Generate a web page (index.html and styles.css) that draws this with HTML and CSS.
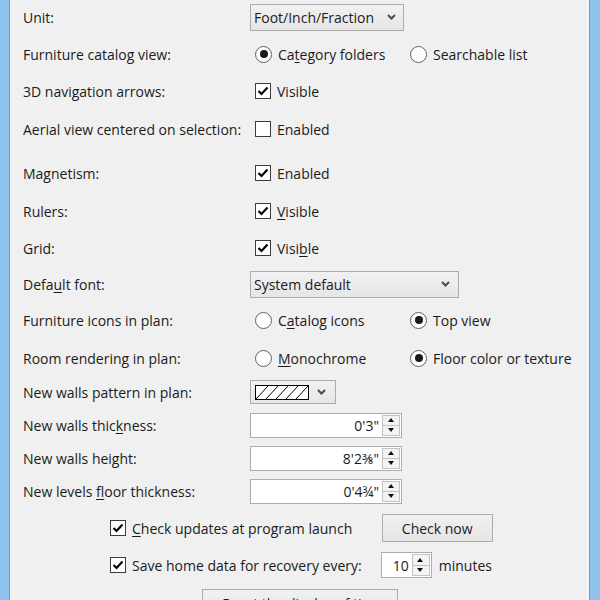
FILE: index.html
```html
<!DOCTYPE html>
<html>
<head>
<meta charset="utf-8">
<link rel="stylesheet" href="styles.css">
</head>
<body>
<div class="dialog">
  <div class="rows">
    <div class="row">
      <span class="label">Unit:</span>
      <div class="combo combo-unit"><span>Foot/Inch/Fraction</span><svg class="chev" width="9" height="6" viewBox="0 0 9 6"><path d="M1 1 L4.5 4.5 L8 1" /></svg></div>
    </div>
    <div class="row g11">
      <span class="label">Furniture catalog view:</span>
      <div class="opt"><span class="rb on"></span><span>Ca<u>t</u>egory folders</span></div>
      <div class="opt"><span class="rb"></span><span>Searchable list</span></div>
    </div>
    <div class="row g11">
      <span class="label">3D navigation arrows:</span>
      <div class="opt"><span class="cb"><svg width="12" height="10" viewBox="0 0 12 10"><path d="M1.5 5 L4.5 8 L10.5 1.5"/></svg></span><span>Visible</span></div>
    </div>
    <div class="row g12">
      <span class="label">Aerial view centered on selection:</span>
      <div class="opt"><span class="cb"></span><span>Enabled</span></div>
    </div>
    <div class="row g18">
      <span class="label">Magnetism:</span>
      <div class="opt"><span class="cb"><svg width="12" height="10" viewBox="0 0 12 10"><path d="M1.5 5 L4.5 8 L10.5 1.5"/></svg></span><span>Enabled</span></div>
    </div>
    <div class="row g12">
      <span class="label">Rulers:</span>
      <div class="opt"><span class="cb"><svg width="12" height="10" viewBox="0 0 12 10"><path d="M1.5 5 L4.5 8 L10.5 1.5"/></svg></span><span><u>V</u>isible</span></div>
    </div>
    <div class="row g11">
      <span class="label">Grid:</span>
      <div class="opt"><span class="cb"><svg width="12" height="10" viewBox="0 0 12 10"><path d="M1.5 5 L4.5 8 L10.5 1.5"/></svg></span><span>Visi<u>b</u>le</span></div>
    </div>
    <div class="row g10">
      <span class="label">Defa<u>u</u>lt font:</span>
      <div class="combo combo-font"><span>System default</span><svg class="chev" width="9" height="6" viewBox="0 0 9 6"><path d="M1 1 L4.5 4.5 L8 1" /></svg></div>
    </div>
    <div class="row g10">
      <span class="label">Furniture icons in plan:</span>
      <div class="opt"><span class="rb"></span><span>C<u>a</u>talog icons</span></div>
      <div class="opt"><span class="rb on"></span><span>Top view</span></div>
    </div>
    <div class="row g12">
      <span class="label">Room rendering in plan:</span>
      <div class="opt"><span class="rb"></span><span><u>M</u>onochrome</span></div>
      <div class="opt"><span class="rb on"></span><span>Floor color or texture</span></div>
    </div>
    <div class="row g8">
      <span class="label">New walls pattern in plan:</span>
      <div class="combo combo-pattern">
        <svg class="hatch" width="54" height="15" viewBox="0 0 54 15"><rect x="0.5" y="0.5" width="53" height="14" fill="#fff" stroke="#000"/><path d="M1 14 L13 1 M11 14 L23 1 M21 14 L33 1 M31 14 L43 1 M41 14 L53 1" stroke="#000" stroke-width="1"/></svg>
        <svg class="chev" width="9" height="6" viewBox="0 0 9 6"><path d="M1 1 L4.5 4.5 L8 1" /></svg>
      </div>
    </div>
    <div class="row g7">
      <span class="label">New walls thic<u>k</u>ness:</span>
      <div class="spin"><span class="val">0'3"</span><span class="btns"><span class="up"></span><span class="dn"></span></span></div>
    </div>
    <div class="row g7">
      <span class="label">New walls height:</span>
      <div class="spin"><span class="val">8'2⅜"</span><span class="btns"><span class="up"></span><span class="dn"></span></span></div>
    </div>
    <div class="row g7">
      <span class="label">New levels <u>f</u>loor thickness:</span>
      <div class="spin"><span class="val">0'4¾"</span><span class="btns"><span class="up"></span><span class="dn"></span></span></div>
    </div>
  </div>
  <div class="extras">
    <div class="opt wide"><span class="cb"><svg width="12" height="10" viewBox="0 0 12 10"><path d="M1.5 5 L4.5 8 L10.5 1.5"/></svg></span><span><u>C</u>heck updates at program launch</span></div>
    <button class="btn btn-check">Check now</button>
    <div class="opt wide"><span class="cb"><svg width="12" height="10" viewBox="0 0 12 10"><path d="M1.5 5 L4.5 8 L10.5 1.5"/></svg></span><span>Save home data for recovery every:</span></div>
    <div class="spin spin-small"><span class="val">10</span><span class="btns"><span class="up"></span><span class="dn"></span></span></div>
    <span class="unit-text">minutes</span>
  </div>
  <div class="reset-wrap"><button class="btn btn-reset">Reset the display of tips</button></div>
</div>
</body>
</html>
```
FILE: styles.css
```css
html, body {
  margin: 0;
  height: 600px;
  overflow: hidden;
}
body {
  background: #8fc3ee;
  font-family: "Open Sans", "Noto Sans", sans-serif;
  font-size: 14px;
  color: #1b1b1b;
}
u { text-decoration: underline; text-underline-offset: 2px; }

.dialog {
  margin-left: 9px;
  width: 579px;
  height: 600px;
  border-left: 1px solid #6b9bcf;
  border-right: 1px solid #6b9bcf;
  background: #f0f0f0;
  box-shadow: inset -3px 0 0 #f4f4f4;
}
.rows {
  padding: 4px 0 0 13px;
}
.row {
  display: flex;
  align-items: center;
  height: 26px;
}
.g7 { margin-top: 7px; }
.g8 { margin-top: 8px; }
.g10 { margin-top: 10px; }
.g11 { margin-top: 11px; }
.g12 { margin-top: 12px; }
.g18 { margin-top: 18px; }

.label {
  width: 227px;
  flex: none;
  white-space: nowrap;
}

.combo {
  display: flex;
  align-items: center;
  justify-content: space-between;
  box-sizing: border-box;
  height: 27px;
  border: 1px solid #acacac;
  background: linear-gradient(#f1f1f1, #e6e6e6);
  padding: 0 7px 0 3px;
}
.combo-unit { width: 154px; }
.combo-font { width: 209px; padding-right: 8px; }
.combo-pattern { width: 86px; height: 24px; padding: 0 9px 0 4px; }
.chev path {
  fill: none;
  stroke: #4a4a4a;
  stroke-width: 2;
}
.hatch { display: block; }

.opt {
  display: flex;
  align-items: center;
  gap: 6px;
  width: 155px;
  margin-left: 5px;
  white-space: nowrap;
}
.opt + .opt { margin-left: 0; }
.cb {
  width: 16px;
  height: 16px;
  box-sizing: border-box;
  border: 1px solid #3c3c3c;
  background: #fff;
  display: flex;
  align-items: center;
  justify-content: center;
  flex: none;
}
.cb svg path {
  fill: none;
  stroke: #000;
  stroke-width: 2.2;
}
.rb {
  width: 17px;
  height: 17px;
  box-sizing: border-box;
  border: 1px solid #606060;
  border-radius: 50%;
  background: #fff;
  flex: none;
  display: flex;
  align-items: center;
  justify-content: center;
}
.rb.on::after {
  content: "";
  width: 8px;
  height: 8px;
  border-radius: 50%;
  background: #1a1a1a;
}

.spin {
  display: flex;
  box-sizing: border-box;
  width: 152px;
  height: 25px;
  border: 1px solid #abadb3;
  background: #fff;
}
.spin .val {
  flex: 1;
  text-align: right;
  padding-right: 3px;
  align-self: center;
}
.spin .btns {
  width: 19px;
  display: flex;
  flex-direction: column;
  padding: 1px 1px 1px 0;
  box-sizing: border-box;
}
.spin .btns span {
  flex: 1;
  border: 1px solid #c2c2c2;
  background: #f3f3f3;
  position: relative;
}
.spin .btns .dn { border-top: none; }
.spin .btns span::after {
  content: "";
  position: absolute;
  left: 50%;
  top: 50%;
  margin-left: -3.5px;
  border-left: 3.5px solid transparent;
  border-right: 3.5px solid transparent;
}
.spin .btns .up::after { border-bottom: 4px solid #111; margin-top: -2px; }
.spin .btns .dn::after { border-top: 4px solid #111; margin-top: -2px; }

.extras {
  display: grid;
  grid-template-columns: auto 51px auto;
  grid-template-rows: 28px 26px;
  column-gap: 0;
  row-gap: 10px;
  justify-content: start;
  align-items: center;
  margin-top: 10px;
  padding-left: 100px;
}
.extras .opt.wide { width: auto; margin: 0 19px 0 0; }
.btn-check { grid-column: 2 / 4; width: 111px; height: 28px; margin-left: 1px; }
.spin-small { width: 51px; height: 26px; }
.spin-small .val { padding-right: 3px; }
.unit-text { margin-left: 7px; }

.btn {
  box-sizing: border-box;
  border: 1px solid #acacac;
  background: linear-gradient(#f1f1f1, #e5e5e5);
  font: inherit;
  color: inherit;
  padding: 0;
}
.reset-wrap {
  display: flex;
  justify-content: center;
  margin-top: 11px;
}
.btn-reset { width: 196px; height: 28px; }
```
